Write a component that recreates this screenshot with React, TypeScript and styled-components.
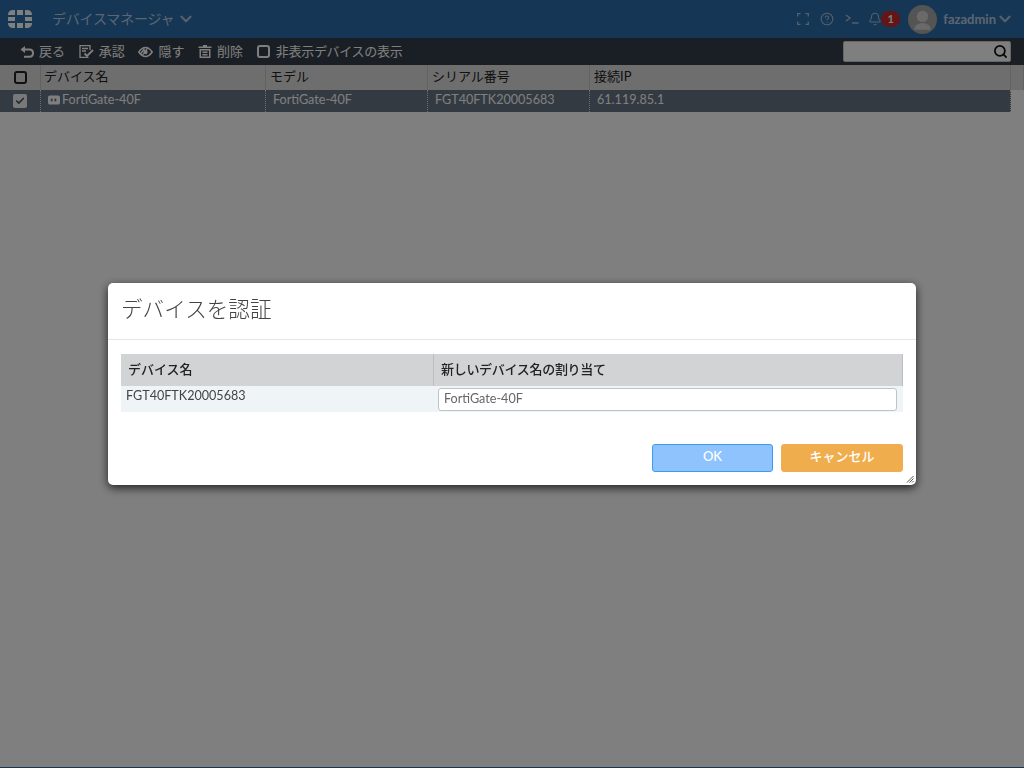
import React from 'react';
import styled, { createGlobalStyle } from 'styled-components';
import { Check, ChevronDown, Search, Bell, CircleHelp } from 'lucide-react';

const GlobalStyle = createGlobalStyle`
  html, body {
    margin: 0;
    height: 100%;
    overflow: hidden;
    background: #fff;
    font-family: Lato, "Noto Sans CJK JP", sans-serif;
    font-size: 13px;
  }
  #root { height: 100%; }
  * { box-sizing: border-box; }
`;

const App = () => (
  <Page>
    <GlobalStyle />
    <Banner>
      <Logo viewBox="0 0 26 20">
        <path d="M8 1H6C3 1 1 3 1 5.500V6H8ZM10 1H16V6H10ZM18 1H20C23 1 25 3 25 5.500V6H18ZM1 8H8V12H1ZM18 8H25V12H18ZM1 14H8V19H6C3 19 1 17 1 14.500ZM10 14H16V19H10ZM18 14H25V14.500C25 17 23 19 20 19H18Z" fill="#fff" />
      </Logo>
      <AppTitle>デバイスマネージャ</AppTitle>
      <ChevronDown size={18} strokeWidth={3} color="#a9c0d8" />
      <BannerRight>
        <svg width="12" height="12" viewBox="0 0 12 12" fill="none" stroke="#a9c0d8" strokeWidth="1.300">
          <path d="M.7 3.500V.7H3.500M8.500.7H11.300V3.500M11.300 8.500V11.300H8.500M3.500 11.300H.7V8.500" />
        </svg>
        <HelpIcon size={14} color="#a9c0d8" strokeWidth={1.800} />
        <svg width="14" height="10" viewBox="0 0 14 10" fill="none" stroke="#a9c0d8" strokeWidth="1.400">
          <path d="M1 1L5 4L1 7M7 9H13.500" />
        </svg>
        <BellWrap>
          <Bell size={14} color="#a9c0d8" strokeWidth={1.800} />
          <Badge>1</Badge>
        </BellWrap>
        <Avatar>
          <svg width="29" height="29" viewBox="0 0 28 28">
            <circle cx="14" cy="11" r="5.500" fill="#d5d5d5" />
            <path d="M6 24C6 19 10 18.500 12 17.500H16C18 18.500 22 19 22 24Z" fill="#d5d5d5" />
          </svg>
        </Avatar>
        <UserName>fazadmin</UserName>
        <ChevronDown size={18} strokeWidth={3} color="#a9c0d8" />
      </BannerRight>
    </Banner>

    <Toolbar>
      <ToolButton>
        <svg width="14" height="12" viewBox="0 0 14 12" fill="none" stroke="#fff" strokeWidth="2">
          <path d="M3 3.500H9.500C11.500 3.500 13 4.800 13 7C13 9.200 11.500 10.800 9.500 10.800H4" />
          <path d="M5 0L.5 3.500L5 7Z" fill="#fff" stroke="none" />
        </svg>
        <ToolLabel>戻る</ToolLabel>
      </ToolButton>
      <ToolButton>
        <svg width="15" height="13" viewBox="0 0 15 13" fill="none" stroke="#fff" strokeWidth="1.300">
          <path d="M9.500 12.400H1V.7H11V5" />
          <path d="M3 3.500H9M3 6H7" />
          <path d="M5.500 8.500L8 11L14 5" strokeWidth="1.800" />
        </svg>
        <ToolLabel>承認</ToolLabel>
      </ToolButton>
      <ToolButton>
        <svg width="15" height="12" viewBox="0 0 15 12" fill="none" stroke="#fff">
          <path d="M.8 6C3 2.800 5.200 1.500 7.500 1.500C9.800 1.500 12 2.800 14.200 6C12 9.200 9.800 10.500 7.500 10.500C5.200 10.500 3 9.200 .8 6Z" strokeWidth="1.500" />
          <circle cx="7.500" cy="6" r="2.200" fill="#fff" stroke="none" />
          <path d="M4 10L10 1.500M2.500 8L6.500 2.500" strokeWidth="1.300" />
        </svg>
        <ToolLabel>隠す</ToolLabel>
      </ToolButton>
      <ToolButton>
        <svg width="14" height="13" viewBox="0 0 14 13" fill="#fff">
          <path d="M5 0H9V1.500H13.500V3H.5V1.500H5Z" />
          <path d="M1.500 4H12.500V13H1.500ZM3 5.500V11.500H11V5.500Z" fillRule="evenodd" />
          <rect x="4.500" y="6.500" width="5" height="1.500" />
          <rect x="4.500" y="9" width="5" height="1.500" />
        </svg>
        <ToolLabel>削除</ToolLabel>
      </ToolButton>
      <ToolButton>
        <EmptyBox />
        <ToolLabel $narrow>非表示デバイスの表示</ToolLabel>
      </ToolButton>
      <SearchBox>
        <Search size={15} strokeWidth={2.800} color="#111" />
      </SearchBox>
    </Toolbar>

    <HeadRow>
      <HeadCell $center>
        <EmptyBox $dark />
      </HeadCell>
      <HeadCell $tight>デバイス名</HeadCell>
      <HeadCell>モデル</HeadCell>
      <HeadCell>シリアル番号</HeadCell>
      <HeadCell>接続IP</HeadCell>
      <HeadCell />
    </HeadRow>
    <DataRow>
      <DataCell $center>
        <TickBox>
          <Check size={10} strokeWidth={4} color="#4a5561" />
        </TickBox>
      </DataCell>
      <DataCell>
        <DeviceIcon viewBox="0 0 13 10">
          <path d="M2 0H11C12 0 13 1 13 2V8C13 9 12 10 11 10H2C1 10 0 9 0 8V2C0 1 1 0 2 0Z" fill="#fff" />
          <rect x="3" y="3.500" width="2" height="3" fill="#687484" />
          <rect x="7" y="3.500" width="2" height="3" fill="#687484" />
        </DeviceIcon>
        FortiGate-40F
      </DataCell>
      <DataCell>FortiGate-40F</DataCell>
      <DataCell>FGT40FTK20005683</DataCell>
      <DataCell>61.119.85.1</DataCell>
    </DataRow>

    <Footer />

    <Overlay>
      <Dialog>
        <DialogTitle>デバイスを認証</DialogTitle>
        <DialogBody>
          <AuthTable>
            <AuthHead>デバイス名</AuthHead>
            <AuthHead $narrow>新しいデバイス名の割り当て</AuthHead>
            <AuthCell>FGT40FTK20005683</AuthCell>
            <AuthCell>
              <NameInput defaultValue="FortiGate-40F" />
            </AuthCell>
          </AuthTable>
        </DialogBody>
        <DialogActions>
          <ActionButton $bg="#8fc3fd" $border="#3d9bf5" $width={121}>
            OK
          </ActionButton>
          <ActionButton $bg="#efad4e" $border="#efad4e" $width={122}>
            キャンセル
          </ActionButton>
        </DialogActions>
        <Grip viewBox="0 0 8 8">
          <path d="M7.500 1L1 7.500M7.500 3.500L3.500 7.500M7.500 6L6 7.500" stroke="#555" strokeWidth="1" />
        </Grip>
      </Dialog>
    </Overlay>
  </Page>
);

export default App;

const Page = styled.div`
  height: 100%;
  display: flex;
  flex-direction: column;
`;

const Banner = styled.header`
  height: 38px;
  flex: none;
  display: flex;
  align-items: center;
  padding: 0 10px 0 7px;
  background: #2c6cab;
  color: #fff;
`;

const Logo = styled.svg`
  width: 26px;
  height: 20px;
  margin-right: 19px;
`;

const AppTitle = styled.span`
  padding-bottom: 3px;
  margin-right: 3px;
  color: #b9cde2;
  font-size: 14px;
  letter-spacing: -0.2px;
`;

const BannerRight = styled.div`
  margin-left: auto;
  display: flex;
  align-items: center;
`;

const HelpIcon = styled(CircleHelp)`
  margin: 0 11px;
`;

const BellWrap = styled.div`
  display: flex;
  align-items: center;
  margin: 0 8px 0 9px;
`;

const Badge = styled.span`
  width: 19px;
  height: 16px;
  margin-left: -1px;
  border-radius: 8px;
  background: #c82a2a;
  color: #fff;
  font-size: 11px;
  font-weight: 700;
  line-height: 16px;
  text-align: center;
`;

const Avatar = styled.div`
  width: 29px;
  height: 29px;
  border-radius: 50%;
  overflow: hidden;
  background: #a8a8a8;
  margin-right: 6px;
`;

const UserName = styled.span`
  color: #b9cde2;
  font-size: 13px;
  font-weight: 700;
`;

const Toolbar = styled.div`
  height: 27px;
  flex: none;
  display: flex;
  align-items: center;
  gap: 13.7px;
  padding: 0 13px 0 20px;
  background: #343f4b;
`;

const ToolButton = styled.div`
  display: flex;
  align-items: center;
  gap: 5px;
  color: #fff;
  font-size: 13px;
`;

const ToolLabel = styled.span<{ $narrow?: boolean }>`
  padding-bottom: 2px;
  margin-left: ${(p) => (p.$narrow ? 1 : 0)}px;
  letter-spacing: ${(p) => (p.$narrow ? -0.3 : 0)}px;
`;

const EmptyBox = styled.span<{ $dark?: boolean }>`
  width: 13px;
  height: 13px;
  border: 2px solid ${(p) => (p.$dark ? '#222' : '#fff')};
  border-radius: 3px;
`;

const SearchBox = styled.div`
  margin-left: auto;
  width: 168px;
  height: 21px;
  display: flex;
  align-items: center;
  justify-content: flex-end;
  padding-right: 2px;
  background: #fff;
  border: 1px solid #ccc;
  border-radius: 2px;
`;

const HeadRow = styled.div`
  height: 25px;
  flex: none;
  display: grid;
  grid-template-columns: 41px 225px 162px 162px 421px 13px;
  background: #dcdcdc;
`;

const HeadCell = styled.div<{ $center?: boolean; $tight?: boolean }>`
  display: flex;
  align-items: center;
  justify-content: ${(p) => (p.$center ? 'center' : 'flex-start')};
  padding: 0 0 ${(p) => (p.$center ? 0 : 5)}px ${(p) => (p.$center ? 0 : p.$tight ? 3 : 4)}px;
  border-right: 1px solid #c4c4c4;
  color: #222;
  font-size: 13px;
`;

const DataRow = styled.div`
  height: 22px;
  flex: none;
  width: 1011px;
  display: grid;
  grid-template-columns: 41px 225px 162px 162px 421px;
  background: #687484;
`;

const DataCell = styled.div<{ $center?: boolean }>`
  display: flex;
  align-items: center;
  justify-content: ${(p) => (p.$center ? 'center' : 'flex-start')};
  padding: 0 0 ${(p) => (p.$center ? 0 : 3)}px ${(p) => (p.$center ? 0 : 7)}px;
  border-right: 1px dotted #ddd;
  color: #fff;
  font-size: 12.6px;
`;

const TickBox = styled.span`
  width: 14px;
  height: 14px;
  display: flex;
  align-items: center;
  justify-content: center;
  background: #f2f2f2;
  border-radius: 2px;
  margin-right: 1px;
`;

const DeviceIcon = styled.svg`
  width: 12px;
  height: 10px;
  margin-right: 2px;
`;

const Footer = styled.div`
  margin-top: auto;
  height: 1px;
  background: #2c6cab;
`;

const Overlay = styled.div`
  position: fixed;
  inset: 0;
  display: flex;
  align-items: center;
  justify-content: center;
  background: rgba(0, 0, 0, 0.5);
`;

const Dialog = styled.div`
  position: relative;
  width: 808px;
  height: 202px;
  display: flex;
  flex-direction: column;
  background: #fff;
  border-radius: 5px;
  box-shadow: 0 3px 10px rgba(0, 0, 0, 0.75);
`;

const DialogTitle = styled.div`
  height: 57px;
  flex: none;
  display: flex;
  align-items: center;
  padding: 0 13px 8px;
  border-bottom: 1px solid #e5e5e5;
  color: #444;
  font-size: 21.6px;
  font-weight: 300;
`;

const DialogBody = styled.div`
  padding: 14px 13px 0;
`;

const AuthTable = styled.div`
  display: grid;
  grid-template-columns: 313px 469px;
  grid-template-rows: 32px 26px;
  background: #eff4f7;
`;

const AuthHead = styled.div<{ $narrow?: boolean }>`
  display: flex;
  align-items: center;
  padding: 0 0 3px 7px;
  background: #d2d3d5;
  border-right: 1px solid #bcbdc0;
  color: #222;
  font-size: 13px;
  font-weight: 500;
  letter-spacing: ${(p) => (p.$narrow ? -0.3 : 0)}px;
`;

const AuthCell = styled.div`
  padding: 1px 5px 0;
  color: #444;
  font-size: 12.6px;
  line-height: 17px;
`;

const NameInput = styled.input`
  display: block;
  width: 100%;
  height: 23px;
  margin-top: 1px;
  margin-left: -1px;
  padding: 0 5px 2px;
  border: 1px solid #bcc5cc;
  border-radius: 3px;
  background: #fff;
  color: #666;
  font-family: inherit;
  font-size: 12.6px;
  outline: none;
`;

const DialogActions = styled.div`
  margin-top: 32px;
  padding-right: 13px;
  display: flex;
  justify-content: flex-end;
  gap: 8px;
`;

const ActionButton = styled.button<{ $bg: string; $border: string; $width: number }>`
  width: ${(p) => p.$width}px;
  height: 28px;
  padding: 0 0 5px;
  background: ${(p) => p.$bg};
  border: 1px solid ${(p) => p.$border};
  border-radius: 3px;
  color: #fff;
  font-family: inherit;
  font-size: 13px;
  font-weight: 500;
`;

const Grip = styled.svg`
  position: absolute;
  right: 2px;
  bottom: 2px;
  width: 8px;
  height: 8px;
`;
